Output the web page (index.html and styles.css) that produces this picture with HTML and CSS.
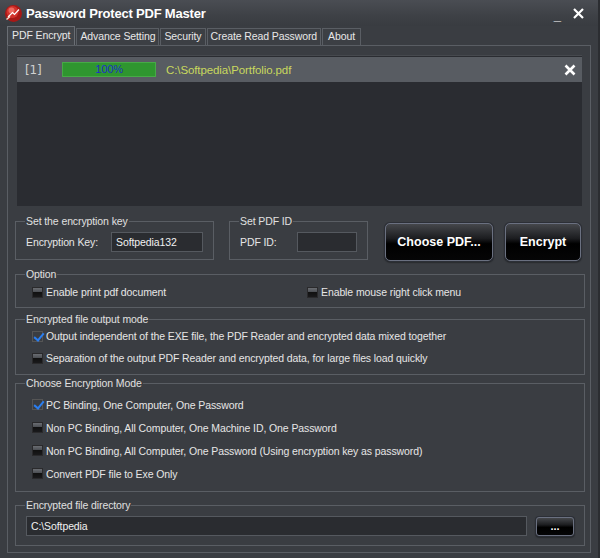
FILE: index.html
```html
<!DOCTYPE html>
<html>
<head>
<meta charset="utf-8">
<link rel="stylesheet" href="styles.css">
</head>
<body>
<div class="window">
  <div class="titlebar">
    <svg class="appicon" width="19" height="19" viewBox="0 0 19 19">
      <circle cx="9.5" cy="9.5" r="8.5" fill="#a81816"/>
      <circle cx="8.5" cy="8" r="6" fill="#d2322c"/>
      <circle cx="7.5" cy="6.5" r="3" fill="#ec6a60"/>
      <path d="M4 13 L8.5 8.5 L10.5 10.5 L15 5.5" stroke="#fff" stroke-width="1.2" fill="none"/>
      <path d="M2.5 15.5 L6 12.5" stroke="#f6d8c8" stroke-width="1.6"/>
    </svg>
    <span class="title">Password Protect PDF Master</span>
    <span class="spacer"></span>
    <span class="ctl min">_</span>
    <svg class="ctl close" width="11" height="11" viewBox="0 0 11 11">
      <path d="M1 1 L10 10 M10 1 L1 10" stroke="#fff" stroke-width="2.2"/>
    </svg>
  </div>
  <div class="tabs">
    <div class="tab active">PDF Encrypt</div>
    <div class="tab">Advance Setting</div>
    <div class="tab">Security</div>
    <div class="tab">Create Read Password</div>
    <div class="tab about">About</div>
  </div>
  <div class="panel">
    <div class="filelist">
      <div class="filerow">
        <span class="idx">[1]</span>
        <span class="progress">100%</span>
        <span class="path">C:\Softpedia\Portfolio.pdf</span>
        <span class="spacer"></span>
        <svg class="remove" width="12" height="12" viewBox="0 0 12 12">
          <path d="M1.5 1.5 L10.5 10.5 M10.5 1.5 L1.5 10.5" stroke="#fff" stroke-width="2.6"/>
        </svg>
      </div>
    </div>
    <div class="toprow">
      <fieldset class="grp keygrp">
        <legend>Set the encryption key</legend>
        <div class="field">
          <span class="lbl">Encryption Key:</span>
          <span class="input keyinput">Softpedia132</span>
        </div>
      </fieldset>
      <fieldset class="grp idgrp">
        <legend>Set PDF ID</legend>
        <div class="field">
          <span class="lbl idlbl">PDF ID:</span>
          <span class="input idinput"></span>
        </div>
      </fieldset>
      <div class="btn choose">Choose PDF...</div>
      <div class="btn encrypt">Encrypt</div>
    </div>
    <fieldset class="grp optgrp">
      <legend>Option</legend>
      <div class="optrow">
        <label class="chk"><span class="box"></span>Enable print pdf document</label>
        <label class="chk"><span class="box"></span>Enable mouse right click menu</label>
      </div>
    </fieldset>
    <fieldset class="grp outgrp">
      <legend>Encrypted file output mode</legend>
      <label class="chk first"><span class="box on"></span>Output independent of the EXE file, the PDF Reader and encrypted data mixed together</label>
      <label class="chk"><span class="box"></span>Separation of the output PDF Reader and encrypted data, for large files load quickly</label>
    </fieldset>
    <fieldset class="grp modegrp">
      <legend>Choose Encryption Mode</legend>
      <label class="chk first"><span class="box on"></span>PC Binding, One Computer, One Password</label>
      <label class="chk"><span class="box"></span>Non PC Binding, All Computer, One Machine ID, One Password</label>
      <label class="chk"><span class="box"></span>Non PC Binding, All Computer, One Password (Using encryption key as password)</label>
      <label class="chk"><span class="box"></span>Convert PDF file to Exe Only</label>
    </fieldset>
    <fieldset class="grp dirgrp">
      <legend>Encrypted file directory</legend>
      <div class="dirrow">
        <span class="input dirinput">C:\Softpedia</span>
        <span class="btn small">...</span>
      </div>
    </fieldset>
  </div>
</div>
</body>
</html>
```
FILE: styles.css
```css
* { box-sizing: border-box; }
html, body { margin: 0; padding: 0; }
body {
  width: 600px; height: 558px; overflow: hidden;
  font-family: "Liberation Sans", Arial, sans-serif;
  font-size: 10.5px; letter-spacing: -0.1px; color: #e6e6e6;
  background: #2c2e32;
}
.window {
  width: 600px; height: 558px;
  background: #3a3d42;
  border-right: 2px solid #2b2d31;
  display: flex; flex-direction: column;
}
.titlebar {
  height: 26px; display: flex; align-items: center;
  padding-left: 4px;
  background: linear-gradient(#4a4d53, #3e4146 60%, #393c41);
}
.appicon { display: block; margin-right: 3px; }
.title { font-weight: bold; font-size: 13px; letter-spacing: -0.2px; color: #fff; }
.spacer { flex: 1; }
.ctl { color: #fff; font-weight: bold; }
.min { margin-right: 12px; position: relative; top: 2px; font-size: 13px; }
.close { display: block; margin-right: 14px; }
.tabs {
  height: 19px; display: flex; align-items: flex-end;
  padding-left: 7px;
}
.tab {
  height: 17px; line-height: 15px;
  padding: 0 3px;
  border: 1px solid #5a5e64; border-bottom: none;
  margin-right: 1px;
  color: #e8e8e8;
  background: #3c3f44;
}
.tab.about { padding: 0 5px; }
.tab.active { height: 19px; line-height: 17px; padding: 0 4px; border-color: #6a6e74; background: #42454a; }
.panel {
  margin: 0 7px 5px 7px;
  flex: 1;
  border: 1px solid #5a5e64;
  padding: 9px 5px 0 7px;
  display: flex; flex-direction: column;
}
.filelist {
  margin: 0 3px 0 2px;
  height: 151px;
  background: #2a2c31;
  border-top: 1px solid #46494e;
  padding-top: 1px;
}
.filerow {
  height: 25px; display: flex; align-items: center;
  background: #585c62;
  padding-left: 8px;
}
.idx { color: #d0d0d0; font-size: 12px; width: 37px; font-family: "DejaVu Sans", sans-serif; }
.progress {
  width: 94px; height: 15px;
  background: #2f962f;
  border: 1px solid #46aa46;
  color: #1d2fc8; text-align: center; line-height: 13px;
  font-size: 11px;
}
.path { color: #c9d85e; margin-left: 10px; font-size: 11.5px; }
.remove { display: block; margin-right: 6px; }
.toprow {
  display: flex; align-items: flex-start;
  margin-top: 9px;
}
fieldset.grp {
  margin: 0; padding: 0 10px;
  border: 1px solid #5a5e64;
  min-width: 0;
}
legend {
  padding: 0 1px; margin-left: -1px;
  color: #e0e0e0; line-height: 13px;
}
.keygrp { width: 199px; height: 45px; }
.idgrp { width: 139px; height: 45px; margin-left: 15px !important; }
.field { display: flex; align-items: center; margin-top: 4px; }
.lbl { width: 85px; }
.idlbl { width: 57px; }
.input {
  height: 20px; line-height: 18px;
  background: #2a2c30;
  border: 1px solid #55595f;
  padding-left: 4px; color: #f0f0f0;
}
.keyinput { width: 92px; }
.idinput { width: 60px; }
.btn {
  display: flex; align-items: center; justify-content: center;
  background: linear-gradient(#45474b 0%, #1c1d20 40%, #000 55%, #050506 100%);
  border: 1px solid #6a7080;
  border-radius: 5px;
  box-shadow: 0 0 0 1px #2c2f36, 0 1px 2px #000;
  color: #fff; font-weight: bold; font-size: 12.5px; letter-spacing: 0;
}
.choose { width: 108px; height: 38px; margin-left: 17px; margin-top: 8px; }
.encrypt { width: 76px; height: 38px; margin-left: 12px; margin-top: 8px; }
.optgrp { margin-top: 7px !important; height: 40px; }
.optrow { display: flex; margin-top: 1px; }
.optrow .chk:first-child { width: 275px; }
.chk { display: flex; align-items: center; height: 22px; }
.chk.first { margin-top: -1px; }
.box {
  width: 11px; height: 11px; margin-left: 6px; margin-right: 3px;
  background: linear-gradient(#6a6d72 0%, #4a4d52 45%, #111 50%, #1a1a1c 100%);
  border: 1px solid #2a2a2c;
  position: relative;
}
.box.on { background: #3a3d42; border-color: #555; }
.box.on::after {
  content: ""; position: absolute; left: 3px; top: -1px;
  width: 4px; height: 8px;
  border: solid #2a7ef0; border-width: 0 2px 2px 0;
  transform: rotate(40deg);
}
.optgrp .chk { height: 20px; }
.outgrp { margin-top: 5px !important; height: 62px; }
.modegrp { margin-top: 2px !important; height: 115px; }
.modegrp .chk { height: 23px; }
.modegrp .chk.first { margin-top: 3px; }
.dirgrp { margin-top: 7px !important; height: 47px; padding-right: 9px; }
.dirrow { display: flex; align-items: center; margin-top: 4px; }
.dirinput { flex: 1; height: 20px; margin-right: 9px; }
.btn.small { width: 38px; height: 19px; font-size: 11px; border-radius: 3px; }
```
